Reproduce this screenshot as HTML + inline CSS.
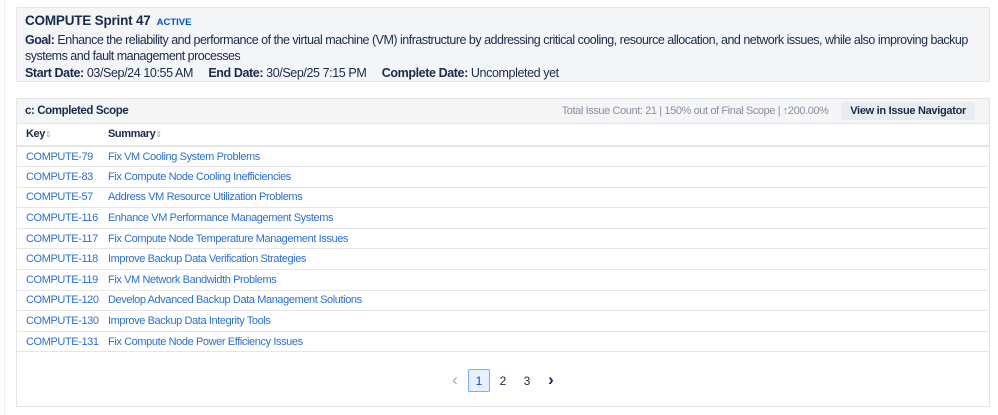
<!DOCTYPE html>
<html><head><meta charset="utf-8"><style>
*{box-sizing:border-box;margin:0;padding:0}
body{width:998px;height:415px;background:#fff;font-family:"Liberation Sans",sans-serif;font-size:11px;letter-spacing:-0.4px;color:#172b4d;position:relative;overflow:hidden}
.edge{position:absolute;left:4px;top:0;bottom:0;border-left:1px solid #eee}
.top{position:absolute;left:16px;top:7px;width:974px;height:75px;background:#f4f5f7;border:1px solid #e4e4e4;border-radius:2px;padding:5px 8px;line-height:16.5px;font-size:12.5px;letter-spacing:-0.4px}
.top b{font-weight:bold}
.g{letter-spacing:-0.5px}
.t{font-size:13.5px;letter-spacing:-0.2px}
.act{color:#0052cc;font-size:9.5px;font-weight:bold;margin-left:6px;letter-spacing:0}
.box{position:absolute;left:16px;top:98px;width:974px;height:309px;border:1px solid #e4e4e4}
.hd{height:25px;background:#f4f5f7;border-bottom:1px solid #e4e4e4;padding:0 8px;line-height:25px;font-weight:bold;position:relative;font-size:11.5px}
.hd .r{position:absolute;right:14px;top:0;font-weight:normal;color:#8a8f99;letter-spacing:-0.4px;font-size:11px}
.btn{display:inline-block;background:#e9ebee;color:#172b4d;font-weight:bold;padding:0 9px;line-height:18px;margin-left:10px;border-radius:3px;letter-spacing:-0.3px}
table{border-collapse:collapse;width:100%;table-layout:fixed}
td,th{height:20.6px;border-bottom:1px solid #e6e6e6;text-align:left;padding:0 0 0 9px;white-space:nowrap;line-height:14px}
th{height:22px;font-weight:bold;border-bottom:2px solid #e4e4e4}
th:first-child,td:first-child{width:82px}
td{color:#2a6fd0}
.s{color:#aaa;font-size:8px;font-weight:normal}
.pg{position:absolute;left:0;right:0;top:269px;text-align:center;font-size:12px;letter-spacing:0}
.pg span{display:inline-block;width:22px;height:23px;line-height:23px;margin:0 1px;color:#172b4d}
.pg .a{border:1px solid #7bb0f0;background:#e6f0ff;border-radius:2px;color:#0052cc}
.pg .ar{font-size:17px}
</style></head><body>
<div class="edge"></div>
<div class="top">
<div><b class="t">COMPUTE Sprint 47</b><span class="act">ACTIVE</span></div>
<div class="g"><b>Goal:</b> Enhance the reliability and performance of the virtual machine (VM) infrastructure by addressing critical cooling, resource allocation, and network issues, while also improving backup systems and fault management processes</div>
<div><b>Start Date:</b> 03/Sep/24 10:55 AM &nbsp;&nbsp;&nbsp;&nbsp;<b>End Date:</b> 30/Sep/25 7:15 PM &nbsp;&nbsp;&nbsp;&nbsp;<b>Complete Date:</b> Uncompleted yet</div>
</div>
<div class="box">
<div class="hd">c: Completed Scope<div class="r">Total Issue Count: 21 | 150% out of Final Scope | ↑200.00% <span class="btn">View in Issue Navigator</span></div></div>
<table>
<tr><th>Key<span class="s">⇕</span></th><th>Summary<span class="s">⇕</span></th></tr>
<tr><td>COMPUTE-79</td><td>Fix VM Cooling System Problems</td></tr>
<tr><td>COMPUTE-83</td><td>Fix Compute Node Cooling Inefficiencies</td></tr>
<tr><td>COMPUTE-57</td><td>Address VM Resource Utilization Problems</td></tr>
<tr><td>COMPUTE-116</td><td>Enhance VM Performance Management Systems</td></tr>
<tr><td>COMPUTE-117</td><td>Fix Compute Node Temperature Management Issues</td></tr>
<tr><td>COMPUTE-118</td><td>Improve Backup Data Verification Strategies</td></tr>
<tr><td>COMPUTE-119</td><td>Fix VM Network Bandwidth Problems</td></tr>
<tr><td>COMPUTE-120</td><td>Develop Advanced Backup Data Management Solutions</td></tr>
<tr><td>COMPUTE-130</td><td>Improve Backup Data Integrity Tools</td></tr>
<tr><td>COMPUTE-131</td><td>Fix Compute Node Power Efficiency Issues</td></tr>
</table>
<div class="pg"><span class="ar" style="color:#aaa">‹</span><span class="a">1</span><span>2</span><span>3</span><span class="ar" style="font-weight:bold">›</span></div>
</div>
</body></html>
